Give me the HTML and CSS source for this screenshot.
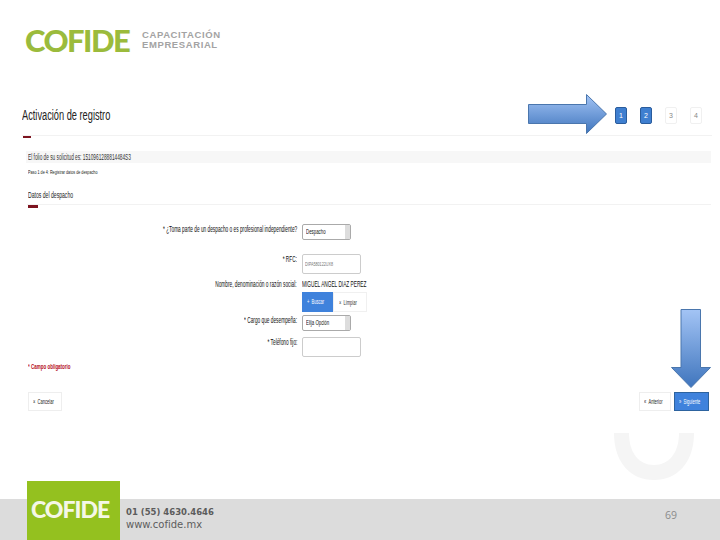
FILE: index.html
```html
<!DOCTYPE html>
<html lang="es">
<head>
  <meta charset="UTF-8" />
  <title>Activación de registro</title>
  <link rel="stylesheet" href="styles.css">
</head>
<body>
  <div class="slide">
    <header class="top">
      <span class="logo">cofide</span>
      <span class="logo-sub">CAPACITACIÓN<br>EMPRESARIAL</span>
    </header>

    <section class="title-row">
      <h1><span class="sq">Activación de registro</span></h1>
      <div class="steps">
        <span class="step on">1</span>
        <span class="step on">2</span>
        <span class="step">3</span>
        <span class="step">4</span>
      </div>
    </section>
    <div class="rule"><i class="mark"></i></div>

    <div class="folio"><span class="sq">El folio de su solicitud es: 1510961288814484S3</span></div>
    <div class="paso"><span class="sq">Paso 1 de 4: Registrar datos de despacho</span></div>

    <h2 class="sub"><span class="sq">Datos del despacho</span></h2>
    <div class="rule rule-sub"><i class="mark"></i></div>

    <form class="form">
      <div class="row row-1">
        <label><span class="sq-r">* ¿Toma parte de un despacho o es profesional independiente?</span></label>
        <div class="select"><span class="sq">Despacho</span><i class="spin"></i></div>
      </div>
      <div class="row row-2">
        <label><span class="sq-r">* RFC:</span></label>
        <div class="input"><span class="sq ph">DIPA580122UX8</span></div>
      </div>
      <div class="row row-3">
        <label><span class="sq-r">Nombre, denominación o razón social:</span></label>
        <div class="name"><span class="sq">MIGUEL ANGEL DIAZ PEREZ</span></div>
      </div>
      <div class="row row-4">
        <label></label>
        <div class="btns">
          <span class="btn blue"><span class="sq">+ &nbsp;Buscar</span></span>
          <span class="btn white"><span class="sq">× &nbsp;Limpiar</span></span>
        </div>
      </div>
      <div class="row row-5">
        <label><span class="sq-r">* Cargo que desempeña:</span></label>
        <div class="select"><span class="sq">Elija Opción</span><i class="spin"></i></div>
      </div>
      <div class="row row-6">
        <label><span class="sq-r">* Teléfono fijo:</span></label>
        <div class="input"></div>
      </div>
    </form>

    <p class="req"><span class="sq">* Campo obligatorio</span></p>

    <div class="actions">
      <span class="btn2 cancel"><span class="sq">× &nbsp;Cancelar</span></span>
      <span class="btn2 prev"><span class="sq">« &nbsp;Anterior</span></span>
      <span class="btn2 next"><span class="sq">» &nbsp;Siguiente</span></span>
    </div>

    <footer class="foot">
      <div class="foot-logo"><span>cofide</span></div>
      <div class="contact">01 (55) 4630.4646<br><span class="web">www.cofide.mx</span></div>
      <div class="num">69</div>
    </footer>

    <svg class="arrow-right" width="80" height="41" viewBox="0 0 80 41">
      <defs>
        <linearGradient id="gr" x1="0" y1="0" x2="0" y2="1">
          <stop offset="0" stop-color="#a3c4f5"/>
          <stop offset="1" stop-color="#3f75bd"/>
        </linearGradient>
      </defs>
      <path d="M.5 10.500H58.500V.5L78.500 20 58.500 39.500V29.500H.5Z" fill="url(#gr)" stroke="#4a76ad"/>
    </svg>
    <svg class="arrow-down" width="41" height="80" viewBox="0 0 41 80">
      <path d="M10 .5H29.500V58.500H39.500L20 78.500 .5 58.500H10Z" fill="url(#gr)" stroke="#4a76ad"/>
    </svg>
    <svg class="ring" width="82" height="48" viewBox="0 0 82 48">
      <path d="M1 0C1 30 18 47 41 47S81 30 81 0H66C66 20 56 32 41 32S16 20 16 0Z" fill="#f5f5f5"/>
    </svg>
  </div>
</body>
</html>
```

FILE: styles.css
```css
* { box-sizing: border-box; margin: 0; padding: 0; }
body {
  font-family: "Liberation Sans", Arial, sans-serif;
  background: #fff;
}
.slide {
  position: relative;
  width: 720px;
  height: 540px;
  overflow: hidden;
  color: #222;
}
.sq {
  display: inline-block;
  white-space: nowrap;
  transform: scaleX(0.62);
  transform-origin: left center;
}
.sq-r {
  display: inline-block;
  white-space: nowrap;
  transform: scaleX(0.53);
  transform-origin: right center;
}

.top {
  display: flex;
  align-items: center;
  height: 28px;
  margin: 26px 0 0 25px;
}
.logo {
  flex: none;
  font-family: "Lato", sans-serif;
  font-weight: 900;
  font-size: 31px;
  line-height: 28px;
  letter-spacing: -1.5px;
  text-transform: uppercase;
  color: #9bbb3c;
  width: 117px;
}
.logo-sub {
  font-size: 9.500px;
  line-height: 10.500px;
  font-weight: bold;
  letter-spacing: 0.6px;
  color: #a3a3a3;
}

.title-row {
  display: flex;
  justify-content: space-between;
  align-items: center;
  height: 26px;
  margin: 48px 18px 0 22px;
}
h1 {
  font-size: 14px;
  font-weight: normal;
  color: #222;
}
h1 .sq { transform: scaleX(0.66); }
.steps {
  display: flex;
  gap: 13px;
}
.step {
  width: 12px;
  height: 17px;
  border: 1px solid #f0f0f0;
  border-radius: 2px;
  font-size: 7px;
  line-height: 15px;
  text-align: center;
  color: #888;
}
.step.on {
  background: #3f7fd0;
  border-color: #2a5c9c;
  color: #fff;
}
.rule {
  height: 1px;
  margin: 7px 8px 0 22px;
  background: #f2f2f2;
}
.mark {
  display: block;
  width: 8px;
  height: 2px;
  margin-left: 1px;
  background: #7d1420;
  transform: translateY(1px);
}

.folio {
  height: 12px;
  margin: 15px 9px 0 26px;
  padding-left: 2px;
  background: #f7f7f7;
  font-size: 8.500px;
  line-height: 12px;
  color: #333;
}
.folio .sq { transform: scaleX(0.56); }
.paso {
  margin: 5px 0 0 28px;
  font-size: 6px;
  line-height: 9px;
  color: #222;
}
.sub {
  margin: 13px 0 0 28px;
  font-size: 8.500px;
  line-height: 11px;
  font-weight: normal;
}
.sub .sq { transform: scaleX(0.6); }
.rule-sub {
  margin: 3px 9px 0 27px;
}
.rule-sub .mark { width: 10px; height: 3px; }

.form {
  display: flex;
  flex-direction: column;
  margin: 19px 0 0 28px;
  font-size: 9px;
  color: #111;
}
.row {
  display: flex;
  gap: 5px;
}
.row label {
  width: 269px;
  flex: none;
  text-align: right;
  line-height: 11px;
}
.row-2 { margin-top: 14px; }
.row-3 { margin-top: 5px; }
.row-4 { margin-top: 2px; }
.row-5 { margin-top: 3px; }
.row-6 { margin-top: 6px; }

.select {
  position: relative;
  width: 49px;
  height: 16px;
  border: 1px solid #aaa;
  border-radius: 2px;
  padding-left: 3px;
  font-size: 7px;
  line-height: 14px;
  background: #fff;
}
.spin {
  position: absolute;
  top: 0;
  right: 0;
  width: 5px;
  height: 100%;
  background: #ddd;
}
.input {
  width: 59px;
  height: 20px;
  border: 1px solid #ccc;
  border-radius: 2px;
  padding-left: 2px;
  font-size: 6px;
  line-height: 18px;
  background: #fff;
}
.ph { color: #777; }
.name {
  height: 11px;
  font-size: 8.500px;
  line-height: 11px;
}
.name .sq { transform: scaleX(0.56); }
.btns {
  display: flex;
  height: 20px;
}
.btn {
  height: 20px;
  font-size: 6.500px;
  line-height: 20px;
  padding-left: 5px;
}
.btn.blue { width: 31px; background: #3f82dc; color: #fff; }
.btn.white { width: 34px; border: 1px solid #f0f0f0; color: #333; }

.req {
  margin: 5px 0 0 28px;
  font-size: 8px;
  line-height: 10px;
  font-weight: bold;
  color: #b5101e;
}
.req .sq { transform: scaleX(0.56); }
.actions {
  display: flex;
  margin: 20px 11px 0 28px;
}
.btn2 {
  height: 19px;
  font-size: 6.500px;
  line-height: 17px;
  padding-left: 4px;
  border: 1px solid #eee;
}
.cancel { width: 34px; margin-right: auto; }
.prev { width: 32px; margin-right: 3px; }
.next {
  width: 35px;
  background: #3f82dc;
  border-color: #2d639f;
  color: #fff;
}

.foot {
  position: absolute;
  left: 0;
  right: 0;
  bottom: 0;
  height: 41px;
  display: flex;
  background: #dcdcdc;
}
.foot-logo {
  align-self: flex-end;
  flex: none;
  width: 93px;
  height: 59px;
  margin-left: 27px;
  background: #94c11f;
  padding: 13px 0 0 4px;
}
.foot-logo span {
  font-family: "Lato", sans-serif;
  font-weight: 900;
  font-size: 23px;
  line-height: 30px;
  letter-spacing: -1px;
  text-transform: uppercase;
  color: #f4f7e6;
}
.contact {
  margin: 7px 0 0 6px;
  font-family: "DejaVu Sans", sans-serif;
  font-size: 8.500px;
  line-height: 12.500px;
  font-weight: bold;
  color: #5c5c5c;
}
.web { font-weight: normal; font-size: 10px; }
.num {
  margin: 9px 0 0 auto;
  padding-right: 43px;
  font-family: "Open Sans", sans-serif;
  font-size: 10.500px;
  line-height: 14px;
  color: #8b8b8b;
}

.arrow-right { position: absolute; left: 528px; top: 94px; }
.arrow-down { position: absolute; left: 671px; top: 309px; }
.ring { position: absolute; left: 613px; top: 433px; }
```
